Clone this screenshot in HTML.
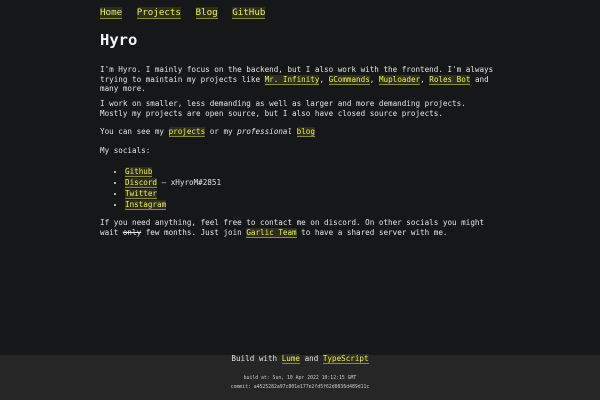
<!DOCTYPE html>
<html><head><style>
html,body{margin:0;padding:0;width:600px;height:400px;overflow:hidden;background:#161719;color:#e4e4e4;font-family:"DejaVu Sans Mono","Liberation Mono",monospace;}
a{color:#ecec6a;text-decoration:none;background:#2e2e1c;border-bottom:1px solid #8a8a3a;}
.wrap{position:absolute;left:100px;top:0;width:420px;}
nav{position:absolute;top:7px;left:0;font-size:9.2px;white-space:nowrap;}
nav a{margin-right:9px;}
h1{position:absolute;top:31px;left:0;margin:0;font-size:15.5px;font-weight:bold;color:#f4f4f4;}
p,ul{position:absolute;left:0;margin:0;font-size:7.6px;line-height:9.5px;white-space:nowrap;}
ul{padding-left:25px;list-style:disc;line-height:11px;}
footer{position:absolute;left:0;top:355px;width:600px;height:45px;background:#262626;text-align:center;}
.b{font-size:7.6px;margin-top:0;position:absolute;top:-1px;width:100%;line-height:10px;}
.s{font-size:4.8px;position:absolute;width:100%;line-height:8px;color:#ccc;}
</style></head><body>
<div class="wrap">
<nav><a>Home</a> <a>Projects</a> <a>Blog</a> <a>GitHub</a></nav>
<h1>Hyro</h1>
<p style="top:65px">I'm Hyro. I mainly focus on the backend, but I also work with the frontend. I'm always<br>trying to maintain my projects like <a>Mr. Infinity</a>, <a>GCommands</a>, <a>Muploader</a>, <a>Roles Bot</a> and<br>many more.</p>
<p style="top:99px">I work on smaller, less demanding as well as larger and more demanding projects.<br>Mostly my projects are open source, but I also have closed source projects.</p>
<p style="top:127px">You can see my <a>projects</a> or my <i>professional</i> <a>blog</a></p>
<p style="top:146px">My socials:</p>
<ul style="top:166px"><li><a>Github</a></li><li><a>Discord</a> — xHyroM#2851</li><li><a>Twitter</a></li><li><a>Instagram</a></li></ul>
<p style="top:218px">If you need anything, feel free to contact me on discord. On other socials you might<br>wait <s>only</s> few months. Just join <a>Garlic Team</a> to have a shared server with me.</p>
</div>
<footer>
<div class="b">Build with <a>Lume</a> and <a>TypeScript</a></div>
<div class="s" style="top:20px">build at: Sun, 10 Apr 2022 10:12:15 GMT</div>
<div class="s" style="top:29px">commit: a4525282a97c801e177e2fd5f62d0836d489d11c</div>
</footer>
</body></html>
